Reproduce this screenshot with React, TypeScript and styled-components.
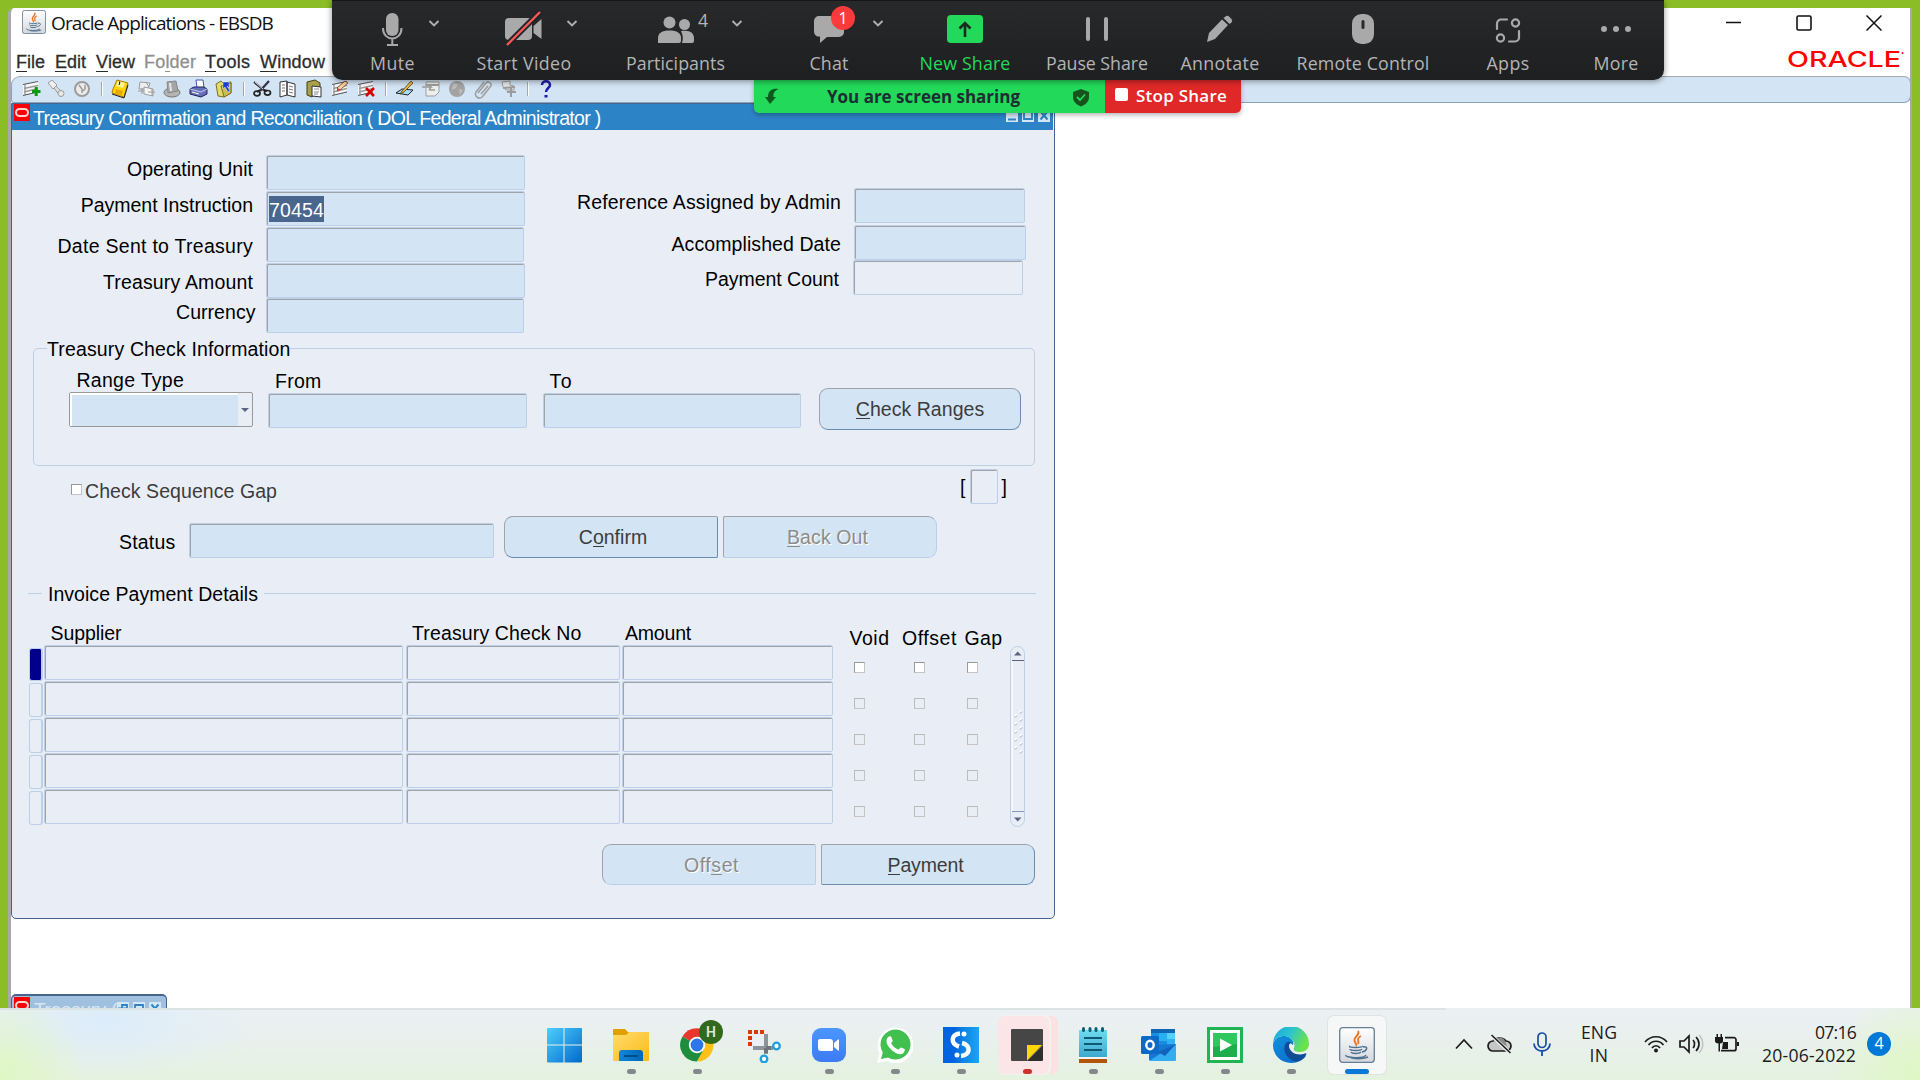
import React, { useLayoutEffect, useRef, useState } from "react";
import styled, { createGlobalStyle, css } from "styled-components";

const arial = `"Liberation Sans", Arial, sans-serif`;
const segoe = `"Open Sans", "Noto Sans", sans-serif`;
const panel = "#e9eef6";
const field = "#d3e4f4";
const edge = "#bccfe6";

const GlobalStyle = createGlobalStyle`
  body { margin: 0; background: #8bbe26; overflow: hidden; }
  *, *::before, *::after { box-sizing: border-box; }
  svg { display: block; flex: none; }
  u { text-decoration: none; box-shadow: inset 0 -1px 0 currentColor; display: inline-block; line-height: 20px; }
`;

/* Text tracked so that it spans a given width. */
const Run = styled.span`
  display: inline-block;
  white-space: pre;
`;
function Fit({ w, n, children }: { w: number; n: number; children: React.ReactNode }) {
  const ref = useRef<HTMLSpanElement>(null);
  const [spacing, setSpacing] = useState(0);
  useLayoutEffect(() => {
    const natural = ref.current!.getBoundingClientRect().width - spacing * n;
    const next = (w - natural) / n;
    if (Math.abs(next - spacing) > 0.01) setSpacing(next);
  }, [w, n, spacing]);
  return (
    <Run ref={ref} style={{ letterSpacing: `${spacing}px` }}>
      {children}
    </Run>
  );
}
const T = ({ w, children }: { w: number; children: string }) => (
  <Fit w={w} n={children.length}>
    {children}
  </Fit>
);

const Screen = styled.div`
  width: 1920px;
  height: 1080px;
  display: flex;
  flex-direction: column;
  background: #8bbe26;
  overflow: hidden;
  position: relative;
`;
const AppWindow = styled.main`
  margin: 8px 8px 0 8px;
  height: 1000px;
  flex: none;
  background: #fff;
  border: solid #a9a9ad;
  border-width: 0 2px 0 3px;
  border-top-left-radius: 6px;
  overflow: hidden;
  display: flex;
  flex-direction: column;
  > * {
    flex: none;
  }
`;
const CaptionBar = styled.header`
  height: 37px;
  display: flex;
  align-items: flex-start;
  padding: 2px 0 0 11px;
`;
const Caption = styled.div`
  margin: -1px 0 0 5px;
  font: 19px/28px ${segoe};
  color: #111;
`;
const CaptionButtons = styled.div`
  margin-left: auto;
  display: flex;
  gap: 54px;
  padding: 5px 28px 0 0;
`;
const MenuRow = styled.nav`
  height: 31px;
  display: flex;
  padding-left: 5px;
  font: 18px/20px ${arial};
  color: #2c2c2c;
  -webkit-text-stroke: 0.3px currentColor;
`;
const MenuItem = styled.span<{ $gap: number; $off?: boolean }>`
  margin: 7px 0 0 ${(p) => p.$gap}px;
  color: ${(p) => (p.$off ? "#8f8f8f" : "inherit")};
`;
const Logo = styled.span`
  margin: 5px 6px 0 auto;
  width: 117px;
  height: 20px;
  svg { overflow: visible; }
`;
const ToolBar = styled.div`
  height: 27px;
  border: 1px solid #8ba2bd;
  border-top-color: #a3a9b0;
  border-radius: 9px 7px 7px 3px;
  background: ${field};
  display: flex;
  align-items: center;
  margin-right: -1px;
  padding: 0 0 2px 6px;
`;
const Tool = styled.span<{ $w: number }>`
  width: ${(p) => p.$w}px;
  display: flex;
  justify-content: center;
  flex: none;
`;
const Sep = styled.i`
  width: 1px;
  height: 14px;
  background: #a7a7a7;
  box-shadow: 1px 0 #fff;
`;

const Form = styled.section`
  width: 1044px;
  height: 816px;
  border: 1px solid #48658e;
  border-radius: 0 0 5px 5px;
  background: ${panel};
  font: 19.5px/22px ${arial};
  color: #000;
  white-space: nowrap;
`;
const FormTitle = styled.div`
  height: 26px;
  background: #2c84c6;
  margin-right: 1px;
  color: #fff;
  display: flex;
`;
const FormCaption = styled.div`
  margin: 3px 0 0 3px;
`;
const FormButtons = styled.div`
  display: flex;
  gap: 4px;
  margin: 5px 3px 0 auto;
`;
const RedO = styled.span<{ $h: number }>`
  width: 16px;
  height: ${(p) => p.$h}px;
  margin-left: 2px;
  background: #f00;
  display: flex;
  justify-content: center;
  align-items: center;
  &::before {
    content: "";
    width: 14px;
    height: 9px;
    border: 2px solid #ffd5d5;
    border-radius: 5px;
  }
`;
const Row = styled.div<{ $h?: number; $pl?: number }>`
  display: flex;
  height: ${(p) => (p.$h ? `${p.$h}px` : "auto")};
  padding-left: ${(p) => p.$pl ?? 0}px;
`;
const Col = styled.div<{ $w?: number; $ml?: number; $pt?: number; $right?: boolean }>`
  display: flex;
  flex-direction: column;
  align-items: ${(p) => (p.$right ? "flex-end" : "flex-start")};
  width: ${(p) => (p.$w ? `${p.$w}px` : "auto")};
  margin-left: ${(p) => p.$ml ?? 0}px;
  padding-top: ${(p) => p.$pt ?? 0}px;
  flex: none;
`;
const Label = styled.div<{ $mt?: number; $ml?: number; $mr?: number; $soft?: boolean }>`
  height: 22px;
  flex: none;
  margin: ${(p) => p.$mt ?? 0}px ${(p) => p.$mr ?? 0}px 0 ${(p) => p.$ml ?? 0}px;
  color: ${(p) => (p.$soft ? "#3c3c3c" : "#000")};
`;
const Field = styled.div<{ $w: number; $mt?: number; $ml?: number; $plain?: boolean }>`
  width: ${(p) => p.$w}px;
  height: 35px;
  flex: none;
  margin: ${(p) => p.$mt ?? 0}px 0 0 ${(p) => p.$ml ?? 0}px;
  border: 1px solid ${edge};
  border-radius: 2px;
  box-shadow: inset 1px 1px 0 #a0a4a9;
  background: ${(p) => (p.$plain ? panel : field)};
  padding: 4px 0 0 2px;
`;
const Selected = styled.div`
  display: inline-block;
  height: 26px;
  line-height: 28px;
  background: #4a658e;
  color: #fff;
`;
const Group = styled.div`
  margin-left: 21px;
  width: 1002px;
  height: 118px;
  border: 1px solid ${edge};
  border-radius: 5px;
`;
const Legend = styled.div`
  width: 243px;
  height: 22px;
  margin: -11px 0 0 13px;
  background: ${panel};
`;
const Combo = styled.div`
  width: 184px;
  height: 35px;
  margin: 1px 0 0 -1px;
  border: 1px solid #999;
  border-radius: 2px;
  display: flex;
  &::before {
    content: "";
    width: 168px;
    background: ${field};
    border: solid #fff;
    border-width: 2px 0 0 2px;
  }
  &::after {
    content: "";
    margin: 15px 0 0 3px;
    width: 0;
    height: 0;
    border: 4px solid transparent;
    border-top-color: #5c6484;
    border-bottom: 0;
  }
`;
const Button = styled.button<{ $w: number; $ml?: number; $mt?: number; $dx?: number; $round: string; $off?: boolean; $h?: number }>`
  width: ${(p) => p.$w}px;
  height: ${(p) => p.$h ?? 42}px;
  flex: none;
  margin: ${(p) => p.$mt ?? 0}px 0 0 ${(p) => p.$ml ?? 0}px;
  padding: 0 ${(p) => Math.max(0, -2 * (p.$dx ?? 0))}px 0 ${(p) => Math.max(0, 2 * (p.$dx ?? 0))}px;
  border: 1px solid;
  border-color: #a0a4a9 #6c8bb0 #6c8bb0 #a0a4a9;
  border-radius: ${(p) => p.$round};
  background: ${field};
  color: #3c3c3c;
  font: 19.5px/22px ${arial};
  ${(p) =>
    p.$off &&
    css`
      border-right-color: ${edge};
      border-bottom-color: ${edge};
      color: #8c8c8c;
      text-shadow: 1px 1px #fff;
    `}
`;
const Box = styled.i<{ $mt?: number; $ml?: number; $off?: boolean }>`
  width: 11px;
  height: 11px;
  flex: none;
  margin: ${(p) => p.$mt ?? 0}px 0 0 ${(p) => p.$ml ?? 0}px;
  border: 1px solid #c4c4c4;
  border-top-color: ${(p) => (p.$off ? "#bbb" : "#999")};
  border-left-color: ${(p) => (p.$off ? "#bbb" : "#999")};
  background: ${(p) => (p.$off ? panel : "#fff")};
`;
const Rule = styled.i<{ $w: number; $ml?: number }>`
  width: ${(p) => p.$w}px;
  margin: 10px 0 0 ${(p) => p.$ml ?? 0}px;
  height: 1px;
  background: ${edge};
`;
const GridRow = styled.div`
  display: flex;
  height: 36px;
`;
const Marker = styled.i<{ $on: boolean }>`
  width: 14px;
  height: ${(p) => (p.$on ? 33 : 34)}px;
  margin: ${(p) => (p.$on ? 3 : 2)}px 1px 0 0;
  border: 1px solid ${edge};
  border-right-width: 2px;
  border-radius: 3px;
  background: ${(p) => (p.$on ? "#00008b" : panel)};
`;

const MinimizedForm = styled.div`
  width: 156px;
  height: 30px;
  margin-top: 75px;
  border: 2px solid #48658e;
  border-width: 2px 1px 0;
  border-radius: 5px 5px 0 0;
  background: #9fc0df;
  display: flex;
  font: 19px/22px ${arial};
  color: #d9e6f1;
  padding-top: 1px;
`;
const MinText = styled.div`
  margin: 2px 0 0 4px;
  width: 83px;
`;
const MinButtons = styled.div`
  display: flex;
  gap: 4px;
  margin: 5px 0 0 0;
`;

/* Meeting controls that float above the desktop */
const MeetingBar = styled.div`
  position: absolute;
  left: 332px;
  top: 0;
  width: 1332px;
  height: 80px;
  border-radius: 0 0 10px 10px;
  background: linear-gradient(#28292b, #1e1f21);
  border-top: 1px solid #151617;
  box-shadow: 0 1px 6px rgba(0, 0, 0, 0.45);
  display: flex;
`;
const Control = styled.div<{ $w: number; $green?: boolean }>`
  width: ${(p) => p.$w}px;
  flex: none;
  position: relative;
  display: flex;
  flex-direction: column;
  align-items: center;
  font: 17.8px/24px ${segoe};
  color: ${(p) => (p.$green ? "#23d959" : "#b4b4b4")};
`;
const Glyph = styled.div`
  height: 50px;
  padding-top: 9px;
`;
const Caret = styled.svg<{ $x: number }>`
  position: absolute;
  left: ${(p) => p.$x}px;
  top: 18px;
`;
const Count = styled.span`
  position: absolute;
  left: 103px;
  top: 7px;
`;
const ChatBadge = styled.span`
  position: absolute;
  left: 75px;
  top: 5px;
  width: 24px;
  height: 24px;
  border-radius: 50%;
  background: #fb3b3b;
  color: #fff;
  font-size: 16px;
  text-align: center;
`;
const ShareStrip = styled.div`
  position: absolute;
  left: 754px;
  top: 80px;
  height: 33px;
  display: flex;
  border-radius: 0 0 5px 5px;
  overflow: hidden;
  box-shadow: 0 2px 5px rgba(0, 0, 0, 0.3);
`;
const Sharing = styled.div`
  width: 351px;
  background: #23d959;
  display: flex;
  padding-left: 10px;
  font: 700 17px/24px ${segoe};
  color: #1e2d33;
`;
const SharingText = styled.div`
  margin: 5px 52px 0 47px;
`;
const StopShare = styled.div`
  width: 136px;
  background: #e02828;
  display: flex;
  padding-left: 10px;
  font: 600 17px/24px ${segoe};
  color: #fff;
  &::before {
    content: "";
    width: 13px;
    height: 13px;
    margin: 8px 8px 0 0;
    border-radius: 2px;
    background: #fff;
  }
`;
const StopText = styled.div`
  margin-top: 4px;
`;

const TaskBar = styled.footer`
  height: 72px;
  display: flex;
  align-items: flex-start;
  padding-left: 532px;
  background:
    linear-gradient(90deg, #dce3e3 1446px, transparent 1446px) 0 0 / 100% 2px no-repeat,
    radial-gradient(circle at 0 66px, #dff7c4 0, rgba(223, 247, 196, 0) 85px),
    radial-gradient(circle at 1920px 66px, #dff7c4 0, rgba(223, 247, 196, 0) 90px),
    radial-gradient(ellipse 150px 55px at 105px 14px, #dcecfa 0, rgba(220, 236, 250, 0) 100%),
    linear-gradient(#ebf1f3, #e9f0ee 40%, #e4f2df);
`;
const AppSlot = styled.div<{ $tile?: boolean; $alert?: boolean }>`
  width: 58px;
  height: 58px;
  margin: 8px 4px 0;
  border-radius: 6px;
  padding-top: 11px;
  position: relative;
  display: flex;
  flex-direction: column;
  align-items: center;
  flex: none;
  ${(p) => p.$tile && "background: #f5f8f7; box-shadow: 0 0 0 1px #dde4e1;"}
  ${(p) => p.$alert && "background: #fce5e6; width: 51px; margin: 8px 11px 0 4px; padding-left: 7px; box-shadow: 1px 0 0 1px #f2f2f1, 9px 0 0 0 #fbe1e2;"}
`;
const Dot = styled.i<{ $w: number; $c: string }>`
  width: ${(p) => p.$w}px;
  height: 5px;
  border-radius: 3px;
  margin-top: 6px;
  background: ${(p) => p.$c};
`;
const Profile = styled.span`
  position: absolute;
  left: 31px;
  top: 4px;
  width: 24px;
  height: 24px;
  border-radius: 50%;
  background: #33691e;
  color: #dbe8d2;
  font: 600 14px/24px Roboto, sans-serif;
  text-align: center;
`;
const Tray = styled.div`
  height: 72px;
  margin-left: 65px;
  display: flex;
  align-items: center;
  font: 17.6px/23px ${segoe};
  color: #1b1b1b;
`;
const TrayItem = styled.div<{ $ml?: number; $align?: string }>`
  margin: 0 0 0 ${(p) => p.$ml ?? 0}px;
  text-align: ${(p) => p.$align ?? "left"};
`;
const Notice = styled.span`
  width: 24px;
  height: 24px;
  margin-left: 11px;
  border-radius: 50%;
  background: #0078d7;
  color: #fff;
  font-size: 16px;
  text-align: center;
`;

const g = "#9c9c9c";
const Tiny = ({ children }: { children: React.ReactNode }) => (
  <svg width="20" height="20" viewBox="0 0 20 20">
    {children}
  </svg>
);
const sheet = (
  <>
    <path d="M2 6 17 2v10L2 16z" fill="#f8f8f8" />
    <path d="M2 5.500 17 2.500M2 16.500l15-3.500" stroke="#555" fill="none" />
    <path d="M4 5v11" stroke="#777" />
    <path d="M3 9.500 17 6.500M3 13l14-3.500" stroke="#9a9a9a" strokeWidth="1.500" />
  </>
);
const tools: { w: number; art?: React.ReactNode }[] = [
  { w: 25, art: <>{sheet}<path d="M11 12.500h8.500M15.200 8v9" stroke="#0a9a0a" strokeWidth="3" /></> },
  { w: 25, art: <><path d="M2 4l4-3 5 5-4 4z" fill="#eee" stroke={g} /><path d="M8 9l2-2 6 6 1 3-3 1z" fill="#ddd" stroke={g} /><circle cx="15" cy="14.500" r="3" fill="#e8e8e8" stroke={g} /></> },
  { w: 28, art: <><circle cx="10" cy="10" r="7" fill="#ececec" stroke={g} strokeWidth="2" /><path d="M7 6l3 4v4M13 6v4l-2 2" stroke={g} fill="none" strokeWidth="1.500" /></> },
  { w: 10 },
  { w: 27, art: <><path d="M7 1 18 4l-4 14-12-4 1-4z" fill="#ffd700" stroke="#b07d00" /><path d="M8 2l7 2-2 5-7-2z" fill="#fff3a0" /><path d="M9 3l1 0-1 3" stroke="#222" /><path d="M6 10l7 2-2 5-6-2z" fill="#e9a800" /><path d="M2 15l12 4 4-13" stroke="#222" fill="none" /></> },
  { w: 26, art: <><path d="M4 3l10 1-2 6H3z" fill="#eee" stroke={g} /><path d="M8 8l9 2v7l-9-2z" fill="#f5f5f5" stroke={g} /><path d="M2 12h6m-2-3v6M12 13h7m-3-3v7M10 3l3 5" stroke={g} /></> },
  { w: 26, art: <><ellipse cx="10" cy="13.500" rx="8" ry="4.500" fill="#b5b5b5" stroke="#777" /><path d="M5 3l9-1 2 10-10 2z" fill="#a5a5a5" stroke="#888" /><path d="M8 4l1 8" stroke="#e8e8e8" strokeWidth="2" /></> },
  { w: 26, art: <><path d="M8 1h7l1 8H9z" fill="#fff" stroke="#4455aa" /><path d="M2 10l4-2h10l3 2v5l-6 3-11-3z" fill="#6570b8" stroke="#20205a" /><path d="M2 10l11 3 6-3" stroke="#c5cbf0" fill="none" /><path d="M4 13l7 2" stroke="#ffd" /></> },
  { w: 26, art: <><path d="M2 5l5-3 2 2 8-1v11l-7 4-6-1z" fill="#e6d96a" stroke="#777022" /><path d="M7 7l10-3v10l-7 4z" fill="#cbbd55" stroke="#777022" /><path d="M9 3h6v6l-2-2 3 5-2 1-3-5-2 2z" fill="#1740d0" stroke="#fff" strokeWidth=".4" /></> },
  { w: 12 },
  { w: 25, art: <><path d="M2 3l11 9M17 2 8 12" stroke="#334" strokeWidth="2.200" /><path d="M3 3l8 7" stroke="#ddd" /><path d="M5 13l3-2M12 11l3 1" stroke="#222" strokeWidth="2" /><ellipse cx="5" cy="14.500" rx="3" ry="2.300" fill="none" stroke="#222" strokeWidth="1.700" /><ellipse cx="15.500" cy="13.800" rx="3" ry="2.300" fill="none" stroke="#222" strokeWidth="1.700" /></> },
  { w: 27, art: <><path d="M2 3l7-1v14l-7 2zM9 3l8 2v13l-8-2z" fill="#fff" stroke="#333" /><path d="M4 6h3M4 9h3M4 12h3M11 7l4 1M11 10l4 1M11 13l4 1" stroke="#777" /></> },
  { w: 26, art: <><path d="M3 3l8-2 5 3v4l-8 10-5-2z" fill="#a9a04d" stroke="#444010" /><path d="M8 7l9 1v10l-9-1z" fill="#fff" stroke="#333" /><path d="M10 10h5M10 13h5M10 15h4" stroke="#888" /></> },
  { w: 26, art: <>{sheet}<path d="M7 9l3 2 8-7-3-2z" fill="#f6d89a" stroke="#733" strokeWidth=".8" /><path d="M7 9l3 2.500-3 1z" fill="#d33" /></> },
  { w: 26, art: <>{sheet}<path d="M10 9l8 8M18 9l-8 8" stroke="#d80000" strokeWidth="2.500" /></> },
  { w: 13 },
  { w: 26, art: <><path d="M1 14l6-4 11 1-5 5z" fill="#a8dcf5" stroke="#222" /><path d="M7 12 16 2l2 2-9 9-4 2z" fill="#efb640" stroke="#442" strokeWidth=".8" /></> },
  { w: 26, art: <><path d="M5 3h13v10l-4 4H5z" fill="#eee" stroke={g} /><path d="M5 6h13" stroke={g} strokeWidth="2" /><path d="M1 8h9l-2-2m2 2-2 3M8 11h6" stroke={g} fill="none" strokeWidth="1.500" /></> },
  { w: 26, art: <><circle cx="10" cy="10" r="8" fill="#a3a3a3" /><path d="M6 4l5 1-2 4-4 2zM12 10l4 1-3 5z" fill="#bdbdbd" /></> },
  { w: 26, art: <path d="M5 14 13 4a3 3 0 0 1 5 3l-8 10a4 4 0 0 1-7-4l8-10m-3 12 7-8" stroke={g} fill="none" strokeWidth="1.500" /> },
  { w: 25, art: <><path d="M3 3l8-1v4l4 1v4H7L4 8z" fill="#e5e5e5" stroke={g} /><path d="M4 9l12-1M12 9v9M8 13h9" stroke={g} strokeWidth="2" /></> },
  { w: 12 },
  { w: 26, art: <><path d="M6 6c0-5 8-5 8 0 0 3-4 3-4 7" stroke="#1a1aae" strokeWidth="2.500" fill="none" /><path d="M8.500 16h3v2.500h-3z" fill="#1a1aae" /></> },
];

const WinBtn = ({ kind, c = "#2c84c6" }: { kind: "min" | "max" | "close" | "restore"; c?: string }) => (
  <svg width="12" height="13" viewBox="0 0 12 13">
    <path d="M0 0h12v13H0z" fill="#d5e7f6" />
    {kind === "min" && <path d="M2 10.500h8" stroke={c} strokeWidth="2" />}
    {kind === "max" && <path d="M2 3h8v7H2z" stroke={c} strokeWidth="1.800" fill="none" />}
    {kind === "close" && <path d="M2.500 2.500l7 8M9.500 2.500l-7 8" stroke={c} strokeWidth="2" />}
    {kind === "restore" && <path d="M5 6V3h5v5H8M2 6.500h6v5H2z" stroke={c} strokeWidth="1.800" fill="none" />}
  </svg>
);
const Java = ({ s }: { s: number }) => (
  <svg width={s} height={s} viewBox="0 0 36 36">
    <defs>
      <linearGradient id="jv" x2="0" y2="1"><stop stopColor="#fff" /><stop offset="1" stopColor="#d5d7dc" /></linearGradient>
    </defs>
    <rect x=".7" y=".7" width="34.600" height="34.600" rx="3" fill="url(#jv)" stroke="#647f96" strokeWidth="1.300" />
    <path d="M19 4c3 4-6 6-3 11 1 2 2 3 1 4M22 9c-6 3-1 5-3 8" fill="none" stroke="#e87424" strokeWidth="1.900" />
    <path d="M11 19c-3 2 14 2 12 0M11 22c0 2 11 2 12 0M12 25c1 2 8 2 10 0M7 28c-2 3 18 4 20 0M24 20c6-1 4 4-1 5M12 31c5 1 12 1 17-1" fill="none" stroke="#4e7291" strokeWidth="1.500" />
  </svg>
);

const taskIcons: { art: React.ReactNode; dot?: string; dotW?: number; tile?: boolean; alert?: boolean }[] = [
  {
    art: (
      <svg width="36" height="36" viewBox="1 0 36 36">
        <defs><linearGradient id="wn" gradientUnits="userSpaceOnUse" x2="36" y2="36"><stop stopColor="#4fd2fd" /><stop offset="1" stopColor="#0068cc" /></linearGradient></defs>
        <path d="M1 2a1 1 0 0 1 1-1h15.500v16.500H1zM18.500 1h16.500a1 1 0 0 1 1 1v15.500H18.500zM1 18.500h16.500v17H2a1 1 0 0 1-1-1zM18.500 18.500h17.500v16a1 1 0 0 1-1 1H18.500z" fill="url(#wn)" />
      </svg>
    ),
  },
  {
    dot: "#83898a",
    art: (
      <svg width="36" height="36" viewBox="0 0 36 36">
        <defs>
          <linearGradient id="fo" x2="1" y2="1"><stop stopColor="#ffdb6b" /><stop offset="1" stopColor="#fcbc19" /></linearGradient>
          <linearGradient id="fb" x2="1"><stop stopColor="#1286d8" /><stop offset="1" stopColor="#0067b8" /></linearGradient>
        </defs>
        <path d="M0 3a1 1 0 0 1 1-1h11l3 3h20l1 1v4H0z" fill="#dfa100" />
        <path d="M0 8h13l3-3h20v28a1 1 0 0 1-1 1H1a1 1 0 0 1-1-1z" fill="url(#fo)" />
        <path d="M6 34V26a3 3 0 0 1 3-3h18a3 3 0 0 1 3 3v8z" fill="url(#fb)" />
        <path d="M11 29h14" stroke="#064a83" strokeWidth="1.800" />
      </svg>
    ),
  },
  {
    dot: "#83898a",
    art: (
      <svg width="36" height="36" viewBox="0 0 36 36">
        <path d="M18 18 3.500 9.500A16.600 16.600 0 0 1 32.500 10z" fill="#e8372c" />
        <path d="M18 18 3.500 9.500A16.600 16.600 0 0 0 18 34.600l7-12z" fill="#1e8e3e" />
        <path d="M18 10h14.500A16.600 16.600 0 0 1 18 34.600L25.500 21z" fill="#fcc018" />
        <circle cx="18" cy="18" r="8.200" fill="#fff" />
        <circle cx="18" cy="18" r="6.400" fill="#2b76e8" />
      </svg>
    ),
  },
  {
    art: (
      <svg width="36" height="36" viewBox="0 0 36 36">
        <rect x="4" y="4" width="16" height="20" rx="2" fill="#eceef5" />
        <path d="M5 3v16M3 5h16" stroke="#d83b01" strokeWidth="4" strokeDasharray="4 2" />
        <path d="M21 7v20M8 21h20" stroke="#8e9599" strokeWidth="4" />
        <path d="M21 21v5M21 21h5" stroke="#6e7477" strokeWidth="4" />
        <circle cx="31.500" cy="19" r="3.300" fill="#fff" stroke="#1c9fe0" strokeWidth="2.300" />
        <circle cx="19" cy="32" r="3.300" fill="#fff" stroke="#1c9fe0" strokeWidth="2.300" />
      </svg>
    ),
  },
  {
    dot: "#83898a",
    art: (
      <svg width="36" height="36" viewBox="0 0 36 36">
        <defs><linearGradient id="zm" x2="0" y2="1"><stop stopColor="#4b96ff" /><stop offset="1" stopColor="#3d7bf5" /></linearGradient></defs>
        <rect x="1" y="1" width="34" height="34" rx="9" fill="url(#zm)" />
        <path d="M7 14a2 2 0 0 1 2-2h10a3 3 0 0 1 3 3v8a1 1 0 0 1-1 1H10a3 3 0 0 1-3-3zM23 16l4-3.500q1-.5 1 .5v10q0 1-1 .5L23 20z" fill="#fff" />
      </svg>
    ),
  },
  {
    dot: "#83898a",
    art: (
      <svg width="36" height="36" viewBox="0 0 36 36">
        <path d="M0 36l2.600-9.500A18 17.800 0 1 1 10 34z" fill="#fff" />
        <path d="M4 32l1.800-6.500A15 15 0 1 1 11 30.500z" fill="#41bf4f" />
        <path d="M12 9.500c1.500-.5 2 0 2.500 1l1.200 3c.3.8-1.700 2.200-1.400 2.900 1.500 3 4 5 7 6 .8.300 2-2.300 2.800-2l3.400 1.700c1 .6-.4 4-2 4.600-3 1.300-7-.5-10-3-3-2.600-6-6.500-6-9.500 0-2 1-4.200 2.500-4.700z" fill="#fff" />
      </svg>
    ),
  },
  {
    dot: "#83898a",
    art: (
      <svg width="36" height="36" viewBox="0 0 36 36">
        <defs><linearGradient id="ss" x2="1"><stop offset=".3" stopColor="#0264e0" /><stop offset=".6" stopColor="#0d86e6" /><stop offset="1" stopColor="#1ea4f2" /></linearGradient></defs>
        <path d="M0 0h36v36H0z" fill="url(#ss)" />
        <path d="M17 6.500c-9 1-10 10-1 13" stroke="#fff" strokeWidth="4.500" fill="none" />
        <path d="M19 16c9 2 9 12-1 13" stroke="#fff" strokeWidth="4.500" fill="none" />
        <circle cx="21" cy="7" r="2.500" fill="#fff" /><circle cx="14" cy="28" r="2.500" fill="#fff" />
      </svg>
    ),
  },
  {
    alert: true,
    dot: "#d0302c",
    art: (
      <svg width="36" height="36" viewBox="0 0 36 36">
        <path d="M2 3a1 1 0 0 1 1-1h30a1 1 0 0 1 1 1v15L18 34H3a1 1 0 0 1-1-1z" fill="#464646" />
        <path d="M34 18v15a1 1 0 0 1-1 1H18z" fill="#2e2e2e" />
        <path d="M18 18h15L18 33.500z" fill="#ffd60a" />
      </svg>
    ),
  },
  {
    dot: "#83898a",
    art: (
      <svg width="36" height="36" viewBox="0 0 36 36">
        <defs><linearGradient id="np" x2="0" y2="1"><stop stopColor="#6edcf0" /><stop offset="1" stopColor="#3fa8cf" /></linearGradient></defs>
        <path d="M4 31h28v5H4z" fill="#b4550c" /><path d="M4 28h28v4H4z" fill="#f3f3f3" />
        <path d="M4 3h28v27H4z" fill="url(#np)" />
        <path d="M9 11h18M9 17h18M9 23h18" stroke="#0f5a72" strokeWidth="1.900" />
        <path d="M8.500 1.500v2M15 1.500v2M21 1.500v2M27.500 1.500v2" stroke="#0b6076" strokeWidth="3" strokeLinecap="round" />
      </svg>
    ),
  },
  {
    dot: "#83898a",
    art: (
      <svg width="36" height="36" viewBox="1 0 36 36">
        <path d="M11 2h24v18H11z" fill="#1066b5" />
        <path d="M11 6h8v8h-8z" fill="#1490df" /><path d="M19 6h8v8h-8z" fill="#29b0f0" /><path d="M27 6h8v6h-8z" fill="#52d2fb" /><path d="M19 14h8v6h-8z" fill="#1a8ce0" /><path d="M27 12h8v8h-8z" fill="#2eb2f3" />
        <path d="M9 18l27-1v15a2 2 0 0 1-2 2H11a2 2 0 0 1-2-2z" fill="#1778d0" />
        <path d="M9 34 36 17v15a2 2 0 0 1-2 2z" fill="#32aef0" />
        <path d="M18 25l7 4 11-12" fill="#1263bd" />
        <rect x="1" y="9" width="18" height="18" rx="1.500" fill="#0b69c7" />
        <ellipse cx="10" cy="18" rx="3.700" ry="4.200" fill="none" stroke="#fff" strokeWidth="2.400" />
      </svg>
    ),
  },
  {
    dot: "#83898a",
    art: (
      <svg width="36" height="36" viewBox="0 0 36 36">
        <path d="M0 0h36v36H0z" fill="#20b455" />
        <path d="M4.500 4.500h27v27h-27z" fill="#2fc85e" stroke="#fff" strokeWidth="3" />
        <path d="M6 20l24-3v13H6z" fill="#1fae4e" />
        <path d="M13 11.500v13L25 18z" fill="#fff" />
      </svg>
    ),
  },
  {
    dot: "#83898a",
    art: (
      <svg width="36" height="36" viewBox="0 0 36 36">
        <defs>
          <linearGradient id="e1" x2="1" y2=".4"><stop stopColor="#1ba7dc" /><stop offset=".5" stopColor="#2cc3cf" /><stop offset="1" stopColor="#6be34a" /></linearGradient>
          <linearGradient id="e2" x2=".6" y2="1"><stop stopColor="#1390da" /><stop offset="1" stopColor="#0a6fd0" /></linearGradient>
        </defs>
        <path d="M0 17c2-8 12-10 17-6 3 2 4 5 3 7-6-5-8 2-5 7 5 8 13 6 18 4-3 4-8 7-15 7A18 18 0 0 1 0 17z" fill="url(#e2)" />
        <path d="M0 17A18 18 0 0 1 36 17c0 5-4 8-9 8-4 0-7-1-6-4 2-4-2-11-9-12-6-.5-11 3-12 8z" fill="url(#e1)" />
        <path d="M13 16c-3 4-2 11 3 15 3 3 7 4 10 3 4-2 6-4 7-6 1-1 0-2-1-1.500-8 3-15-1-16-7 0-2 .5-3 2-4-2-1.500-4-.5-5 .5z" fill="#0e4c96" />
      </svg>
    ),
  },
  { tile: true, dot: "#0a78d6", dotW: 24, art: <Java s={36} /> },
];

const CaretIcon = ({ x }: { x: number }) => (
  <Caret $x={x} width="12" height="9" viewBox="0 0 12 9">
    <path d="M1.500 2 6 6.500 10.500 2" fill="none" stroke="#b0b0b0" strokeWidth="1.900" />
  </Caret>
);
const gi = "#a9a9a9";

export default function App() {
  return (
    <Screen>
      <GlobalStyle />
      <AppWindow>
        <CaptionBar>
          <Java s={24} />
          <Caption><T w={222}>Oracle Applications - EBSDB</T></Caption>
          <CaptionButtons>
            <svg width="16" height="16" viewBox="0 0 16 16"><path d="M0 7.500h15" stroke="#111" strokeWidth="1.500" /></svg>
            <svg width="16" height="16" viewBox="0 0 16 16"><rect x="1" y="1" width="14" height="14" rx="1.500" fill="none" stroke="#111" strokeWidth="1.600" /></svg>
            <svg width="16" height="16" viewBox="0 0 16 16"><path d="M.5.5l15 15M15.500.5l-15 15" stroke="#111" strokeWidth="1.500" /></svg>
          </CaptionButtons>
        </CaptionBar>
        <MenuRow>
          <MenuItem $gap={0}><Fit w={29} n={4}><u>F</u>ile</Fit></MenuItem>
          <MenuItem $gap={10}><Fit w={31} n={4}><u>E</u>dit</Fit></MenuItem>
          <MenuItem $gap={10}><Fit w={39} n={4}><u>V</u>iew</Fit></MenuItem>
          <MenuItem $gap={9} $off><Fit w={52} n={6}>Fo<u>l</u>der</Fit></MenuItem>
          <MenuItem $gap={9}><Fit w={45} n={5}><u>T</u>ools</Fit></MenuItem>
          <MenuItem $gap={10}><Fit w={65} n={6}><u>W</u>indow</Fit></MenuItem>
          <Logo>
            <svg width="117" height="20">
              <text x="0" y="17" textLength="114" lengthAdjust="spacingAndGlyphs" fill="#f00" fontFamily="Inter" fontWeight="500" fontSize="21">ORACLE</text>
              <circle cx="115.500" cy="3" r="1" fill="#f00" />
            </svg>
          </Logo>
        </MenuRow>
        <ToolBar>
          {tools.map((t, i) => (
            <Tool key={i} $w={t.w}>{t.art ? <Tiny>{t.art}</Tiny> : <Sep />}</Tool>
          ))}
        </ToolBar>

        <Form>
          <FormTitle>
            <RedO $h={17} />
            <FormCaption><T w={567.5}>Treasury Confirmation and Reconciliation ( DOL Federal Administrator )</T></FormCaption>
            <FormButtons><WinBtn kind="min" /><WinBtn kind="max" /><WinBtn kind="close" /></FormButtons>
          </FormTitle>
          <Row $h={218}>
            <Col $w={241} $right>
              <Label $mt={28}><T w={126}>Operating Unit</T></Label>
              <Label $mt={14}><T w={172.5}>Payment Instruction</T></Label>
              <Label $mt={19}><T w={195.5}>Date Sent to Treasury</T></Label>
              <Label $mt={14}><T w={150}>Treasury Amount</T></Label>
              <Label $mt={8} $mr={-2.5}><T w={79.5}>Currency</T></Label>
            </Col>
            <Col $ml={13} $pt={25}>
              <Field $w={259} />
              <Field $w={259} $mt={1}><Selected><T w={55}>70454</T></Selected></Field>
              <Field $w={258} $mt={1} />
              <Field $w={259} $mt={1} />
              <Field $w={258} />
            </Col>
            <Col $w={316} $right>
              <Label $mt={61}><T w={264}>Reference Assigned by Admin</T></Label>
              <Label $mt={20}><T w={169.5}>Accomplished Date</T></Label>
              <Label $mt={13} $mr={2}><T w={134}>Payment Count</T></Label>
            </Col>
            <Col $ml={13} $pt={58}>
              <Field $w={171} />
              <Field $w={172} $mt={2} />
              <Field $w={170} $ml={-1} $plain />
            </Col>
          </Row>
          <Group>
            <Legend><T w={243.5}>Treasury Check Information</T></Legend>
            <Row $pl={36}>
              <Col $pt={9}>
                <Label $ml={6.5}><T w={107.5}>Range Type</T></Label>
                <Combo />
              </Col>
              <Col $ml={15} $pt={10}>
                <Label $ml={7}><T w={46.5}>From</T></Label>
                <Field $w={259} $mt={1} />
              </Col>
              <Col $ml={16} $pt={10}>
                <Label $ml={6.5}><T w={23.5}>To</T></Label>
                <Field $w={258} $mt={1} />
              </Col>
              <Button $w={202} $ml={18} $mt={28} $round="9px"><Fit w={128.5} n={12}><u>C</u>heck Ranges</Fit></Button>
            </Row>
          </Group>
          <Row $h={50} $pl={59}>
            <Box $mt={18} />
            <Label $mt={14} $ml={3} $soft><T w={192}>Check Sequence Gap</T></Label>
            <Label $mt={10} $ml={683}>[</Label>
            <Field $w={28} $mt={3} $ml={5} $plain />
            <Label $mt={10} $ml={3}>]</Label>
          </Row>
          <Row $h={67} $pl={107}>
            <Label $mt={15}><T w={56.5}>Status</T></Label>
            <Field $w={305} $mt={7} $ml={13.5} />
            <Button $w={214} $ml={10} $dx={2} $round="9px 2px 2px 9px"><Fit w={68.5} n={7}>C<u>o</u>nfirm</Fit></Button>
            <Button $w={214} $ml={5} $dx={-2.5} $round="2px 9px 9px 2px" $off><Fit w={81} n={8}><u>B</u>ack Out</Fit></Button>
          </Row>
          <Row $h={39} $pl={16}>
            <Rule $w={14} />
            <Label $ml={6}><T w={210}>Invoice Payment Details</T></Label>
            <Rule $w={772} $ml={6} />
          </Row>
          <Row $h={23} $pl={38.5}>
            <Label><T w={71}>Supplier</T></Label>
            <Label $ml={290.5}><T w={169.5}>Treasury Check No</T></Label>
            <Label $ml={43.5}><T w={66}>Amount</T></Label>
            <Label $ml={158.5} $mt={5}><T w={40}>Void</T></Label>
            <Label $ml={12.5} $mt={5}><T w={55}>Offset</T></Label>
            <Label $ml={7.5} $mt={5}><T w={38}>Gap</T></Label>
          </Row>
          <Row $h={199} $pl={17}>
            <Col>
              {[0, 1, 2, 3, 4].map((i) => (
                <GridRow key={i}>
                  <Marker $on={i === 0} />
                  <Field $w={359} $plain />
                  <Field $w={214} $ml={3} $plain />
                  <Field $w={211} $ml={2} $plain />
                  <Box $mt={17} $ml={21} $off={i > 0} />
                  <Box $mt={17} $ml={49} $off={i > 0} />
                  <Box $mt={17} $ml={42} $off={i > 0} />
                </GridRow>
              ))}
            </Col>
            <Col $ml={32} $pt={1}>
              <svg width="16" height="182" viewBox="0 0 16 182">
                <rect x=".5" y=".5" width="14" height="180" rx="7" fill={panel} stroke={edge} />
                <path d="M2 14v152" stroke="#fff" />
                <path d="M4 9.500h7.500L7.700 5.500zM4 171.500h7.500L7.700 175.500z" fill="#5c6484" />
                <path d="M2 14.500h12" stroke="#5c6484" /><path d="M2 165.500h12" stroke="#8299bb" />
                {Array.from({ length: 11 }, (_, i) => (
                  <path key={i} d={`M${i % 2 ? 5 : 10} ${67.5 + i * 4 - 1}l2-2`} stroke="#fff" strokeWidth="2" />
                ))}
                {Array.from({ length: 11 }, (_, i) => (
                  <path key={i} d={`M${i % 2 ? 5 : 10} ${67.5 + i * 4}l2-2`} stroke="#7f9cc0" />
                ))}
              </svg>
            </Col>
          </Row>
          <Row $pl={590}>
            <Button $w={214} $h={41} $dx={2.5} $round="9px 2px 2px 9px" $off><Fit w={55} n={6}>Off<u>s</u>et</Fit></Button>
            <Button $w={214} $h={41} $ml={5} $dx={-2.5} $round="2px 9px 9px 2px"><Fit w={76} n={7}><u>P</u>ayment</Fit></Button>
          </Row>
        </Form>

        <MinimizedForm>
          <RedO $h={17} />
          <MinText><T w={83}>Treasury (</T></MinText>
          <MinButtons><WinBtn kind="restore" /><WinBtn kind="max" /><WinBtn kind="close" /></MinButtons>
        </MinimizedForm>
      </AppWindow>

      <TaskBar>
        {taskIcons.map((t, i) => (
          <AppSlot key={i} $tile={t.tile} $alert={t.alert}>
            {t.art}
            {t.dot && <Dot $w={t.dotW ?? 9} $c={t.dot} />}
            {i === 2 && <Profile>H</Profile>}
          </AppSlot>
        ))}
        <Tray>
          <svg width="18" height="12" viewBox="0 0 18 12"><path d="M1 10.500 9 2l8 8.500" stroke="#1b1b1b" strokeWidth="1.700" fill="none" /></svg>
          <TrayItem $ml={14}>
            <svg width="26" height="20" viewBox="0 0 26 20">
              <path d="M6 17a5 5 0 0 1 0-10 8 7 0 0 1 13 0 5 5 0 0 1 0 10z" fill="#c6c6c6" stroke="#1b1b1b" strokeWidth="1.700" />
              <path d="M6 7a8 7 0 0 1 11-2l3 7-8-3z" fill="#8a8a8a" />
              <path d="M4 1l19 18" stroke="#ecf2f0" strokeWidth="3.500" /><path d="M4.500 1l19 18" stroke="#1b1b1b" strokeWidth="1.600" />
            </svg>
          </TrayItem>
          <TrayItem $ml={20}>
            <svg width="18" height="25" viewBox="0 0 18 25"><rect x="5" y="1" width="8" height="14.500" rx="4" fill="none" stroke="#174ea6" strokeWidth="1.700" /><path d="M1 11.500c0 10 16 10 16 0M9 19v5" fill="none" stroke="#174ea6" strokeWidth="1.800" /></svg>
          </TrayItem>
          <TrayItem $ml={30} $align="center"><T w={36}>ENG</T><br /><T w={19}>IN</T></TrayItem>
          <TrayItem $ml={27}>
            <svg width="24" height="18" viewBox="0 0 24 18"><path d="M1 7c6-7 16-7 22 0M4.500 10c4-5 11-5 15 0M8 13c2-3 6-3 8 0" fill="none" stroke="#1b1b1b" strokeWidth="1.700" /><circle cx="12" cy="15.500" r="2" fill="#1b1b1b" /></svg>
          </TrayItem>
          <TrayItem $ml={11}>
            <svg width="25" height="20" viewBox="0 0 25 20"><path d="M1 7h4l5-5v16l-5-5H1zM14 6c2 2 2 6 0 8M17 3c4 4 4 10 0 14" fill="none" stroke="#1b1b1b" strokeWidth="1.700" /><path d="M20 1c5 5 5 13 0 18" fill="none" stroke="#bfc4c2" strokeWidth="1.500" /></svg>
          </TrayItem>
          <TrayItem $ml={11}>
            <svg width="25" height="20" viewBox="0 0 25 20"><path d="M10 3.700h9a2 2 0 0 1 2 2v9a2 2 0 0 1-2 2H6" fill="none" stroke="#1b1b1b" strokeWidth="1.700" /><path d="M22 8h2v4h-2zM8 8h5v7H7zM0 3h8v4q0 2-3 2.500v8H3.500v-8Q0 9 0 7zM1.500 0H3v3H1.500zM5.500 0H7v3H5.500z" fill="#1b1b1b" /></svg>
          </TrayItem>
          <TrayItem $ml={22} $align="right"><T w={41}>07:16</T><br /><T w={94}>20-06-2022</T></TrayItem>
          <Notice>4</Notice>
        </Tray>
      </TaskBar>

      <ShareStrip>
        <Sharing>
          <svg width="16" height="30" viewBox="0 0 16 30"><path d="M14.500 9C9 8 4 10 4 17H1l5 7 6-7H9.500c-.5-4 1-6 5-8z" fill="#0b5a1e" /></svg>
          <SharingText><T w={193}>You are screen sharing</T></SharingText>
          <svg width="18" height="30" viewBox="0 0 18 30"><path d="M9 9l8 3v5c0 5-4 8-8 9.500C5 25 1 22 1 17v-5z" fill="#17531c" /><path d="M5 17l3 3 5-5.500" stroke="#23d959" strokeWidth="1.800" fill="none" /></svg>
        </Sharing>
        <StopShare><StopText><T w={91}>Stop Share</T></StopText></StopShare>
      </ShareStrip>

      <MeetingBar>
        <Control $w={121}>
          <Glyph>
            <svg width="22" height="38" viewBox="0 0 22 38"><rect x="4" y="3" width="12.500" height="23" rx="6" fill={gi} /><path d="M1 18c0 14 18.500 14 18.500 0M10.300 28v7M5 35h11" fill="none" stroke={gi} strokeWidth="2" /></svg>
          </Glyph>
          <T w={45}>Mute</T><CaretIcon x={96} />
        </Control>
        <Control $w={142}>
          <Glyph>
            <svg width="38" height="38" viewBox="0 0 38 38"><rect x="0" y="8" width="27" height="22" rx="4" fill={gi} /><path d="M28.500 16l8-7v20l-8-6z" fill={gi} /><path d="M2 35 35 2" stroke="#242527" strokeWidth="6" /><path d="M2 35 35 2" stroke="#ff5a5a" strokeWidth="2.200" /></svg>
          </Glyph>
          <T w={95}>Start Video</T><CaretIcon x={113} />
        </Control>
        <Control $w={161}>
          <Glyph>
            <svg width="36" height="38" viewBox="0 0 36 38"><circle cx="11.500" cy="12.500" r="6" fill={gi} /><path d="M0 33v-5c0-5 4-7.500 11.500-7.500S23 23 23 28v3q0 2-2 2z" fill={gi} /><circle cx="26.500" cy="14.500" r="5.500" fill={gi} /><path d="M23 21c9-1.500 13 2 13 7v3q0 2-2 2H24q2-6-1-12z" fill={gi} /></svg>
          </Glyph>
          <T w={99}>Participants</T><Count>4</Count><CaretIcon x={136} />
        </Control>
        <Control $w={146}>
          <Glyph>
            <svg width="32" height="38" viewBox="0 0 32 38"><path d="M6 6h20a5 5 0 0 1 5 5v11a5 5 0 0 1-5 5H14l-7 6v-6.500a5 5 0 0 1-6-5V11a5 5 0 0 1 5-5z" fill={gi} /></svg>
          </Glyph>
          <T w={39}>Chat</T><ChatBadge>1</ChatBadge><CaretIcon x={116} />
        </Control>
        <Control $w={126} $green>
          <Glyph>
            <svg width="36" height="38" viewBox="0 0 36 38"><rect x="0" y="5" width="36" height="28" rx="4" fill="#23d959" /><path d="M18 27V13M12.500 18.500 18 13l5.500 5.500" fill="none" stroke="#1c2b22" strokeWidth="2.600" /></svg>
          </Glyph>
          <T w={91}>New Share</T>
        </Control>
        <Control $w={138}>
          <Glyph><svg width="22" height="38" viewBox="0 0 22 38"><path d="M2 9v20M20 9v20" stroke={gi} strokeWidth="4" strokeLinecap="round" /></svg></Glyph>
          <T w={102}>Pause Share</T>
        </Control>
        <Control $w={108}>
          <Glyph><svg width="26" height="38" viewBox="0 0 26 38"><path d="M0 32l2-9L15 9.500l6 5.500L8 29zM16.500 8l2-1.500q2-1.500 4 .5l2 2q1.500 2 0 3.500L22.500 14z" fill={gi} /></svg></Glyph>
          <T w={79}>Annotate</T>
        </Control>
        <Control $w={178}>
          <Glyph><svg width="22" height="38" viewBox="0 0 22 38"><rect x="0" y="4" width="22" height="30" rx="9.500" fill={gi} /><rect x="9.500" y="10" width="3" height="9" rx="1.500" fill="#2a2b2d" /></svg></Glyph>
          <T w={133}>Remote Control</T>
        </Control>
        <Control $w={112}>
          <Glyph><svg width="26" height="38" viewBox="0 0 26 38"><path d="M12 9.500H6a4 4 0 0 0-4 4V19M14 31.500h6a4 4 0 0 0 4-4V21" fill="none" stroke={gi} strokeWidth="2.200" strokeLinecap="round" /><circle cx="20.500" cy="13" r="3.600" fill="none" stroke={gi} strokeWidth="2.200" /><circle cx="5.500" cy="28" r="3.600" fill="none" stroke={gi} strokeWidth="2.200" /></svg></Glyph>
          <T w={43}>Apps</T>
        </Control>
        <Control $w={104}>
          <Glyph><svg width="32" height="38" viewBox="0 0 32 38"><circle cx="4" cy="19" r="3" fill={gi} /><circle cx="16" cy="19" r="3" fill={gi} /><circle cx="28" cy="19" r="3" fill={gi} /></svg></Glyph>
          <T w={45}>More</T>
        </Control>
      </MeetingBar>
    </Screen>
  );
}
